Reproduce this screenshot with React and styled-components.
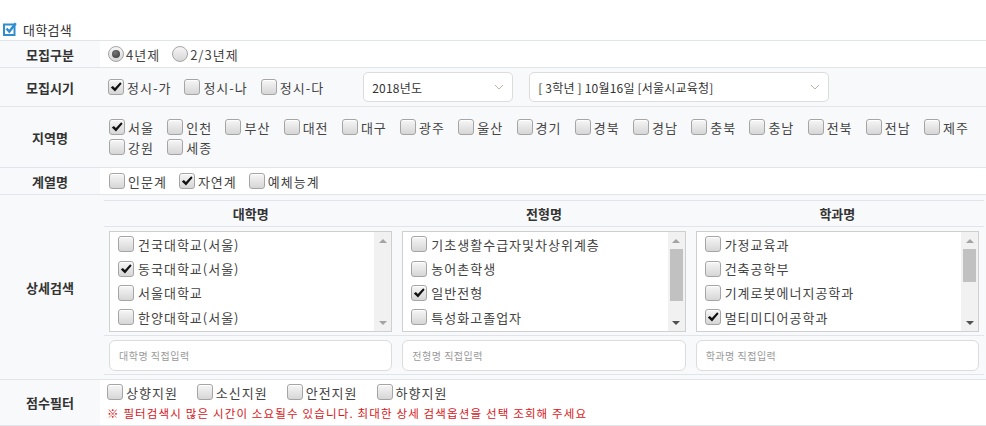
import styled, { createGlobalStyle } from "styled-components";

const GRAY = "#f8f9fb";
const LINE = "#e1e4e8";

const GlobalStyle = createGlobalStyle`
  * { box-sizing: border-box; }
  body {
    margin: 0;
    background: #fff;
    font-family: "Noto Sans CJK KR", "Noto Sans", sans-serif;
    color: #333;
  }
`;

const Page = styled.div`
  width: 986px;
  padding-top: 18px;
`;

const Title = styled.h2`
  display: flex;
  align-items: center;
  gap: 6px;
  height: 22px;
  margin: 0;
  padding-left: 3px;
  font-size: 13px;
  font-weight: normal;
  letter-spacing: 0.3px;
  color: #333;
`;

const Table = styled.div`
  border-top: 1px solid ${LINE};
`;

const Row = styled.div`
  display: grid;
  grid-template-columns: 100px 1fr;
  border-bottom: 1px solid ${LINE};
  background: ${(p) => (p.$gray ? GRAY : "#fff")};
`;

const Label = styled.div`
  display: flex;
  align-items: center;
  justify-content: center;
  background: ${GRAY};
  font-size: 13px;
  font-weight: bold;
  color: #333;
`;

const Cell = styled.div`
  display: flex;
  flex-wrap: wrap;
  align-items: center;
  padding: ${(p) => p.$pad || "3px 8px"};
`;

const Item = styled.label`
  display: inline-flex;
  align-items: center;
  gap: ${(p) => p.$inner || 3}px;
  height: 20px;
  margin-right: ${(p) => p.$gap ?? 13}px;
  font-size: 13px;
  letter-spacing: 1px;
  color: #444;
  white-space: nowrap;
`;

const Box = styled.span`
  flex: none;
  display: flex;
  align-items: center;
  justify-content: center;
  width: 16px;
  height: 16px;
  border: 1px solid #a5a5a5;
  border-radius: 3px;
  background: linear-gradient(#f6f6f6, #d6d6d6);
  box-shadow: inset 0 1px 0 #fff;
`;

const RadioCircle = styled.span`
  flex: none;
  display: flex;
  align-items: center;
  justify-content: center;
  width: 16px;
  height: 16px;
  border: 1px solid #a5a5a5;
  border-radius: 50%;
  background: linear-gradient(#f6f6f6, #d6d6d6);
  &::after {
    content: "";
    display: ${(p) => (p.$on ? "block" : "none")};
    width: 8px;
    height: 8px;
    border-radius: 50%;
    background: radial-gradient(circle at 40% 35%, #777, #333);
  }
`;

const SelectBox = styled.div`
  display: flex;
  align-items: center;
  justify-content: space-between;
  width: ${(p) => p.$w}px;
  height: 30px;
  margin-left: ${(p) => p.$ml || 0}px;
  padding: 0 8px;
  border: 1px solid #dcdcdc;
  border-radius: 5px;
  background: #fff;
  font-size: 12px;
  letter-spacing: 0.2px;
  color: #333;
`;

const Note = styled.div`
  width: 100%;
  height: 17px;
  margin-top: 3px;
  font-size: 11.5px;
  letter-spacing: 1.15px;
  line-height: 17px;
  color: #d7161a;
`;

const Sub = styled.div`
  display: grid;
  grid-template-columns: repeat(3, 1fr);
  border-bottom: 1px solid ${LINE};
  border-top: ${(p) => (p.$head ? `1px solid ${LINE}` : "none")};
`;

const SubHead = styled.div`
  height: 25px;
  display: flex;
  align-items: center;
  justify-content: center;
  font-size: 13px;
  font-weight: bold;
  color: #333;
`;

const SubCell = styled.div`
  padding: 4px 5px 3px;
`;

const ListBox = styled.div`
  display: flex;
  height: 101px;
  border: 1px solid #cfcfcf;
  background: #fff;
  overflow: hidden;
`;

const ListItems = styled.div`
  flex: 1;
  padding-left: 8px;
`;

const ListItem = styled(Item)`
  display: flex;
  height: 24.4px;
  gap: 4px;
  margin: 0;
`;

const Scroll = styled.div`
  display: flex;
  flex-direction: column;
  width: 17px;
  background: #f1f1f1;
`;

const Arrow = styled.div`
  height: 17px;
  display: flex;
  align-items: center;
  justify-content: center;
  &::before {
    content: "";
    border-left: 4px solid transparent;
    border-right: 4px solid transparent;
    ${(p) =>
      p.$up
        ? `border-bottom: 4px solid ${p.$color};`
        : `border-top: 4px solid ${p.$color};`}
  }
`;

const Track = styled.div`
  flex: 1;
`;

const Thumb = styled.div`
  height: ${(p) => p.$h}px;
  margin: 0 2px;
  background: #c1c1c1;
`;

const TextInput = styled.input`
  display: block;
  width: 100%;
  height: 31px;
  padding: 0 9px;
  border: 1px solid #dcdcdc;
  border-radius: 6px;
  background: #fff;
  font-family: inherit;
  font-size: 10px;
  letter-spacing: 0.5px;
  outline: none;
  &::placeholder {
    color: #9a9a9a;
  }
`;

function CheckMark() {
  return (
    <svg width="12" height="12" viewBox="0 0 12 12">
      <path d="M0.8 6.6 L2.9 4.9 L4.9 7.1 L10.2 1.3 L11.6 2.8 L5 10.6 Z" fill="#111" />
    </svg>
  );
}

function Check({ label, on, gap, inner }) {
  return (
    <Item $gap={gap} $inner={inner}>
      <Box>{on && <CheckMark />}</Box>
      {label}
    </Item>
  );
}

function Radio({ label, on, gap }) {
  return (
    <Item $gap={gap} $inner={2}>
      <RadioCircle $on={on} />
      {label}
    </Item>
  );
}

function Chevron() {
  return (
    <svg width="10" height="6" viewBox="0 0 10 6">
      <path d="M1 1 L5 5 L9 1" fill="none" stroke="#bdb3a6" strokeWidth="1" />
    </svg>
  );
}

function TitleIcon() {
  return (
    <svg width="14" height="14" viewBox="0 0 14 14">
      <rect x="1" y="2.5" width="10.5" height="10.5" fill="none" stroke="#2f8dd0" strokeWidth="2" />
      <path d="M3.5 6.5 L6.3 9.6 L12.8 1.2" fill="none" stroke="#2f8dd0" strokeWidth="2.4" />
    </svg>
  );
}

function List({ items, thumb }) {
  return (
    <ListBox>
      <ListItems>
        {items.map(([t, on]) => (
          <ListItem key={t}>
            <Box>{on && <CheckMark />}</Box>
            {t}
          </ListItem>
        ))}
      </ListItems>
      <Scroll>
        <Arrow $up $color="#a3a3a3" />
        <Track>{thumb && <Thumb $h={thumb} />}</Track>
        <Arrow $color={thumb ? "#505050" : "#a3a3a3"} />
      </Scroll>
    </ListBox>
  );
}

const regions = ["서울", "인천", "부산", "대전", "대구", "광주", "울산", "경기", "경북", "경남", "충북", "충남", "전북", "전남", "제주", "강원", "세종"];

const columns = [
  {
    head: "대학명",
    placeholder: "대학명 직접입력",
    items: [["건국대학교(서울)"], ["동국대학교(서울)", true], ["서울대학교"], ["한양대학교(서울)"]],
  },
  {
    head: "전형명",
    placeholder: "전형명 직접입력",
    thumb: 52,
    items: [["기초생활수급자및차상위계층"], ["농어촌학생"], ["일반전형", true], ["특성화고졸업자"]],
  },
  {
    head: "학과명",
    placeholder: "학과명 직접입력",
    thumb: 33,
    items: [["가정교육과"], ["건축공학부"], ["기계로봇에너지공학과"], ["멀티미디어공학과", true]],
  },
];

export default function App() {
  return (
    <Page>
      <GlobalStyle />
      <Title>
        <TitleIcon />
        대학검색
      </Title>
      <Table>
        <Row>
          <Label>모집구분</Label>
          <Cell>
            <Radio label="4년제" on gap={12} />
            <Radio label="2/3년제" />
          </Cell>
        </Row>
        <Row $gray>
          <Label>모집시기</Label>
          <Cell $pad="4px 8px">
            <Check label="정시-가" on />
            <Check label="정시-나" />
            <Check label="정시-다" gap={0} />
            <SelectBox $w={150} $ml={39}>
              2018년도
              <Chevron />
            </SelectBox>
            <SelectBox $w={300} $ml={16}>
              [ 3학년 ] 10월16일 [서울시교육청]
              <Chevron />
            </SelectBox>
          </Cell>
        </Row>
        <Row $gray>
          <Label>지역명</Label>
          <Cell $pad="10px 0 10px 9px">
            {regions.map((r) => (
              <Check key={r} label={r} on={r === "서울"} gap={13.3} />
            ))}
          </Cell>
        </Row>
        <Row>
          <Label>계열명</Label>
          <Cell $pad="3px 9px">
            <Check label="인문계" gap={12} />
            <Check label="자연계" on gap={12} />
            <Check label="예체능계" />
          </Cell>
        </Row>
        <Row $gray>
          <Label>상세검색</Label>
          <Cell $pad="5px 2px 4px 4px" style={{ display: "block" }}>
            <Sub $head>
              {columns.map((c) => (
                <SubHead key={c.head}>{c.head}</SubHead>
              ))}
            </Sub>
            <Sub>
              {columns.map((c) => (
                <SubCell key={c.head}>
                  <List items={c.items} thumb={c.thumb} />
                </SubCell>
              ))}
            </Sub>
            <Sub>
              {columns.map((c) => (
                <SubCell key={c.head}>
                  <TextInput placeholder={c.placeholder} />
                </SubCell>
              ))}
            </Sub>
          </Cell>
        </Row>
        <Row>
          <Label>점수필터</Label>
          <Cell $pad="2px 8px 3px 7px">
            <Check label="상향지원" gap={19} />
            <Check label="소신지원" gap={19} />
            <Check label="안전지원" gap={19} />
            <Check label="하향지원" gap={19} />
            <Note>※ 필터검색시 많은 시간이 소요될수 있습니다. 최대한 상세 검색옵션을 선택 조회해 주세요</Note>
          </Cell>
        </Row>
      </Table>
    </Page>
  );
}
